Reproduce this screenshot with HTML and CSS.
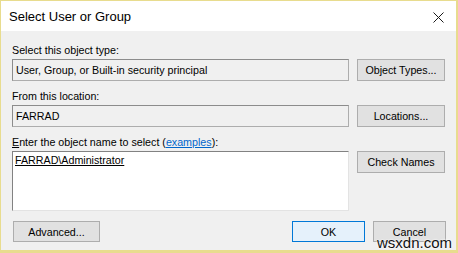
FILE: index.html
```html
<!DOCTYPE html>
<html>
    <head>
        <title>Select User or Group</title>
        <meta charset="UTF-8">
        <link rel="stylesheet" href="styles.css">
    </head>
    <body>
        <div class="window">
            <div class="titlebar">
                <span class="title">Select User or Group</span>
                <svg class="close" width="11" height="11" viewBox="0 0 11 11">
                    <path d="M0.5 0.5 L10.5 10.5 M10.5 0.5 L0.5 10.5" stroke="#1a1a1a" stroke-width="1" fill="none"/>
                </svg>
            </div>

            <div class="content">
                <!-- object type -->
                <p class="label">Select this object type:</p>
                <div class="row">
                    <div class="field readonly">User, Group, or Built-in security principal</div>
                    <button class="btn">Object Types...</button>
                </div>

                <!-- location -->
                <p class="label">From this location:</p>
                <div class="row">
                    <div class="field readonly">FARRAD</div>
                    <button class="btn">Locations...</button>
                </div>

                <!-- names -->
                <p class="label"><u>E</u>nter the object name to select (<a class="link">examples</a>):</p>
                <div class="row last">
                    <div class="field names"><u>FARRAD\Administrator</u></div>
                    <button class="btn">Check Names</button>
                </div>

                <div class="footer">
                    <button class="btn advanced">Advanced...</button>
                    <div class="actions">
                        <button class="btn ok">OK</button>
                        <button class="btn">Cancel</button>
                    </div>
                </div>
            </div>
            <span class="watermark">wsxdn.com</span>
        </div>
    </body>
</html>
```

FILE: styles.css
```css
* {
    margin: 0;
    padding: 0;
    box-sizing: border-box;
}

body {
    font-family: "Liberation Sans", Arial, sans-serif;
    font-size: 10.7px;
    color: #000;
    background: #fff;
}

.window {
    position: relative;
    width: 458px;
    height: 253px;
    border: 1px solid #e8dc8e;
    border-bottom-width: 3px;
    border-right-width: 2px;
    background: #f0f0f0;
    display: flex;
    flex-direction: column;
}

.titlebar {
    height: 30px;
    background: #fff;
    display: flex;
    align-items: center;
    justify-content: space-between;
    padding: 0 12px 0 8px;
}

.title {
    font-size: 13px;
    color: #000;
    margin-top: 1px;
}

.close {
    margin-top: 2px;
}

.content {
    flex: 1;
    padding: 13px 10px 0 11px;
    display: flex;
    flex-direction: column;
}

.label {
    height: 15px;
    line-height: 13px;
}

.link {
    color: #0066cc;
    text-decoration: underline;
}

.row {
    display: flex;
    gap: 8px;
    align-items: flex-start;
    margin-bottom: 9px;
}

.row.last {
    margin-bottom: 10px;
}

.field {
    width: 337px;
    height: 22px;
    padding: 3px 3px;
    line-height: 14px;
    white-space: nowrap;
}

.readonly {
    background: #f0f0f0;
    border: 1px solid #adadad;
    border-top-color: #8c8c8c;
    border-left-color: #8c8c8c;
}

.names {
    height: 60px;
    background: #fff;
    border: 1px solid #e3e3e3;
    border-top-color: #828282;
    border-left-color: #828282;
    padding: 1px 2px;
}

.btn {
    width: 88px;
    height: 22px;
    font-family: inherit;
    font-size: 10.7px;
    color: #000;
    background: #e1e1e1;
    border: 1px solid #adadad;
}

.footer {
    display: flex;
    justify-content: space-between;
    padding-left: 1px;
}

.advanced {
    width: 87px;
    height: 21px;
}

.actions {
    display: flex;
    gap: 8px;
}

.actions .btn {
    width: 73px;
    height: 21px;
}

.ok {
    background: #e5f1fb;
    border-color: #0078d7;
}

.watermark {
    position: absolute;
    right: 4px;
    bottom: 0;
    font-size: 15px;
    line-height: 15px;
    color: #111;
    text-shadow: 0 0 2px #fff, 0 0 2px #fff;
}
```
